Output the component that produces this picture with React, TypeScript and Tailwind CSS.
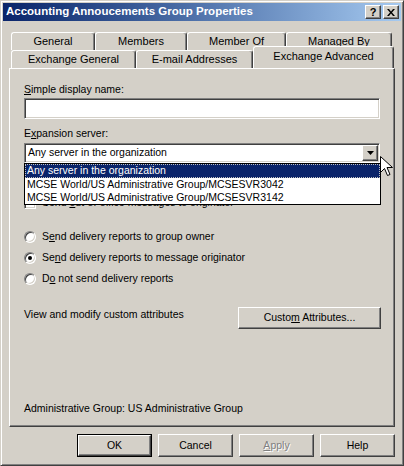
import React from 'react';

const font = { fontFamily: '"Liberation Sans", Arial, sans-serif' };

const raised =
  'border border-t-white border-l-white border-r-[#404040] border-b-[#404040] shadow-[inset_-1px_-1px_0_#808080,inset_1px_1px_0_#d4d0c8]';
const sunken =
  'border border-t-[#808080] border-l-[#808080] border-r-white border-b-white shadow-[inset_1px_1px_0_#404040,inset_-1px_-1px_0_#d4d0c8]';

function U({ children }: { children: React.ReactNode }) {
  return <span className="underline underline-offset-[1px]">{children}</span>;
}

function Tab({ label, w, selected }: { label: string; w: number; selected?: boolean }) {
  return (
    <div
      style={{ width: w }}
      className={
        'flex items-center justify-center rounded-t-[3px] border-t border-l border-t-white border-l-white border-r border-r-[#404040] shadow-[inset_-1px_0_0_#808080] bg-[#d4d0c8] text-[11px] text-black ' +
        (selected ? 'h-[22px] -mt-[3px] pb-[3px] relative z-10' : 'h-[18px]')
      }
    >
      {label}
    </div>
  );
}

function Radio({ checked, children }: { checked?: boolean; children: React.ReactNode }) {
  return (
    <div className="flex items-center h-[13px]">
      <div className="w-[12px] h-[12px] rounded-full border border-t-[#808080] border-l-[#808080] border-r-white border-b-white bg-white shadow-[inset_1px_1px_0_#404040,inset_-1px_-1px_0_#d4d0c8] flex items-center justify-center">
        {checked && <div className="w-[4px] h-[4px] rounded-full bg-black" />}
      </div>
      <span className="ml-[6px]">{children}</span>
    </div>
  );
}

function Btn({ children, def, disabled }: { children: React.ReactNode; def?: boolean; disabled?: boolean }) {
  return (
    <div className={'w-[75px] h-[23px] ' + (def ? 'border border-black' : '')}>
      <div
        className={
          'w-full h-full flex items-center justify-center ' +
          raised +
          (disabled ? ' text-[#808080] [text-shadow:1px_1px_0_#fff]' : ' text-black')
        }
      >
        <span>{children}</span>
      </div>
    </div>
  );
}

export default function App() {
  return (
    <div
      style={font}
      className="w-[404px] h-[466px] bg-[#d4d0c8] relative overflow-hidden text-[10.5px] text-black border border-t-[#d4d0c8] border-l-[#d4d0c8] border-r-[#404040] border-b-[#404040] shadow-[inset_1px_1px_0_#fff,inset_-1px_-1px_0_#808080] p-[2px]"
    >
      {/* title bar */}
      <div className="h-[18px] flex items-center justify-between bg-gradient-to-r from-[#0a246a] to-[#a6caf0] pl-[3px] pr-[2px]">
        <span className="text-white font-bold text-[11.5px] leading-none">
          Accounting Annoucements Group Properties
        </span>
        <div className="flex items-center">
          <div className={'w-[16px] h-[14px] bg-[#d4d0c8] flex items-center justify-center font-bold text-[11px] leading-none ' + raised}>
            ?
          </div>
          <div className={'w-[16px] h-[14px] ml-[2px] bg-[#d4d0c8] flex items-center justify-center ' + raised}>
            <svg width="8" height="7" viewBox="0 0 8 7">
              <path d="M0 0h2l2 2.5L6 0h2L5 3.5 8 7H6L4 4.5 2 7H0l3-3.5z" fill="#000" />
            </svg>
          </div>
        </div>
      </div>

      <div className="pl-[6px]">
        {/* tabs */}
        <div className="mt-[11px] ml-[2px] flex">
          <Tab label="General" w={84} />
          <Tab label="Members" w={92} />
          <Tab label="Member Of" w={99} />
          <Tab label="Managed By" w={106} />
        </div>
        <div className="ml-[2px] flex items-end h-[18px]">
          <Tab label="Exchange General" w={125} />
          <Tab label="E-mail Addresses" w={117} />
          <Tab label="Exchange Advanced" w={141} selected />
        </div>

        {/* panel */}
        <div className="w-[386px] h-[359px] border border-t-white border-l-white border-r-[#404040] border-b-[#404040] shadow-[inset_-1px_-1px_0_#808080] pl-[14px] pr-[13px] pt-[14px] relative">
          <div className="h-[13px] leading-[13px]">
            <U>S</U>imple display name:
          </div>
          <div className={'mt-[2px] h-[21px] w-[356px] bg-white ' + sunken} />
          <div className="mt-[8px] h-[13px] leading-[13px]">
            E<U>x</U>pansion server:
          </div>
          <div className="relative mt-[3px] w-[356px] z-20">
            <div className={'h-[20px] bg-white flex items-center justify-between pl-[3px] pr-[1px] ' + sunken}>
              <span>Any server in the organization</span>
              <div className={'w-[16px] h-[16px] bg-[#d4d0c8] flex items-center justify-center ' + raised}>
                <svg width="7" height="4" viewBox="0 0 7 4">
                  <path d="M0 0h7L3.5 4z" fill="#000" />
                </svg>
              </div>
            </div>
            <div className="absolute left-0 top-full w-[357px] bg-white border border-black">
              <div className="h-[14px] bg-[#0a246a] text-white flex items-center pl-[2px] outline outline-1 outline-dotted outline-[#c0c0c0] -outline-offset-1">
                Any server in the organization
              </div>
              <div className="h-[13px] flex items-center pl-[2px]">MCSE World/US Administrative Group/MCSESVR3042</div>
              <div className="h-[13px] flex items-center pl-[2px]">MCSE World/US Administrative Group/MCSESVR3142</div>
            </div>
          </div>

          {/* check box row, mostly hidden behind the open list */}
          <div className="mt-[33px] flex items-center h-[13px] relative z-0">
            <div className={'w-[12px] h-[12px] bg-white ' + sunken} />
            <span className="ml-[6px]">
              Send <U>o</U>ut-of-office messages to originator
            </span>
          </div>

          <div className="mt-[21px] flex flex-col gap-[8px]">
            <Radio>
              S<U>e</U>nd delivery reports to group owner
            </Radio>
            <Radio checked>
              Se<U>n</U>d delivery reports to message originator
            </Radio>
            <Radio>
              D<U>o</U> not send delivery reports
            </Radio>
          </div>

          <div className="mt-[22px] flex items-start justify-between">
            <div className="mt-[1px] h-[13px] leading-[13px]">View and modify custom attributes</div>
            <div className={'w-[143px] h-[22px] flex items-center justify-center ' + raised}>
              <span>
                Custo<U>m</U> Attributes...
              </span>
            </div>
          </div>

          <div className="mt-[73px] h-[13px] leading-[13px]">Administrative Group: US Administrative Group</div>
        </div>

        {/* buttons */}
        <div className="mt-[7px] w-[386px] flex justify-end gap-[6px]">
          <Btn def>OK</Btn>
          <Btn>Cancel</Btn>
          <Btn disabled>
            <U>A</U>pply
          </Btn>
          <Btn>Help</Btn>
        </div>
      </div>

      {/* mouse pointer */}
      <svg className="absolute left-[379px] top-[155px] z-30" width="13" height="21" viewBox="0 0 13 21">
        <path d="M0.5 0.5v16l4-4 3 7 2.5-1-3-7h5.5z" fill="#fff" stroke="#000" strokeWidth="1" strokeLinejoin="miter" />
      </svg>
    </div>
  );
}
